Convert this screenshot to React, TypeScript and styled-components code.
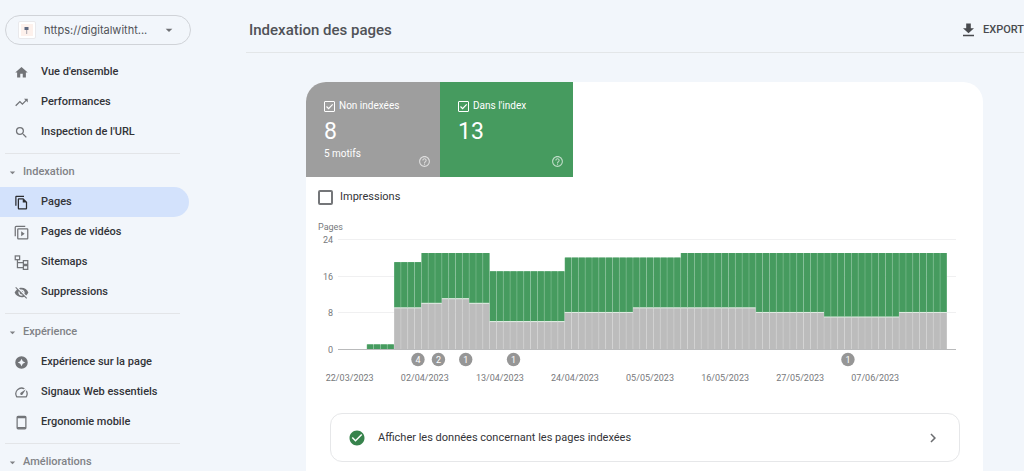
import React from "react";
import styled, { createGlobalStyle } from "styled-components";
import {
  MdArrowDropDown,
  MdCheckCircle,
  MdChevronRight,
  MdHelpOutline,
  MdHome,
  MdOutlineFileCopy,
  MdOutlineSpeed,
  MdSearch,
  MdTrendingUp,
  MdVisibilityOff,
} from "react-icons/md";

const GlobalStyle = createGlobalStyle`
  *, *::before, *::after { box-sizing: border-box; }
  body {
    margin: 0;
    background: #f2f6fb;
    color: #333438;
    font-family: Roboto, "Liberation Sans", sans-serif;
    font-size: 11px;
    line-height: 16px;
    overflow: hidden;
  }
  button { font: inherit; color: inherit; border: 0; background: none; padding: 0; cursor: pointer; }
`;

const Layout = styled.div`
  display: grid;
  grid-template-columns: 246px minmax(0, 1fr);
  height: 100vh;
  overflow: hidden;
`;

const Sidebar = styled.aside`
  padding-top: 15px;
`;

const PropertyPicker = styled.button`
  display: flex;
  align-items: center;
  width: 186px;
  height: 30px;
  margin: 0 0 12px 5px;
  padding: 0 13px 0 12px;
  border: 1px solid #d0d3d8;
  border-radius: 15px;
  color: #505257;
  font-family: Inter, Roboto, sans-serif;

  > svg:last-child { color: #6f7175; }
`;

const PropertyName = styled.span`
  flex: 1;
  margin-left: 8px;
  text-align: left;
`;

const Nav = styled.nav`
  font-weight: 500;
`;

const NavLink = styled.a<{ $active?: boolean }>`
  display: flex;
  align-items: center;
  gap: 12px;
  width: 189px;
  height: 30px;
  padding-left: 14px;
  border-radius: 0 15px 15px 0;
  background: ${(p) => (p.$active ? "#d3e2fc" : "transparent")};
  color: #333438;
  text-decoration: none;
  white-space: nowrap;

  svg {
    color: ${(p) => (p.$active ? "#2b2c30" : "#727478")};
  }
`;

const SectionToggle = styled.button`
  display: flex;
  align-items: center;
  gap: 4px;
  height: 30px;
  padding-left: 6px;
  color: #808286;
  font-weight: 500;
`;

const Divider = styled.hr`
  width: 175px;
  height: 1px;
  margin: 6px 0 3px 5px;
  border: 0;
  background: #e3e5e8;
`;

const Main = styled.main`
  min-width: 0;
`;

const Header = styled.header`
  display: flex;
  align-items: center;
  justify-content: space-between;
  height: 53px;
  padding: 7px 0 0 3px;
  border-bottom: 1px solid #e3e6e8;
`;

const Title = styled.h1`
  margin: 0;
  color: #505257;
  font-size: 15px;
  font-weight: 500;
  line-height: 20px;
`;

const ExportButton = styled.button`
  display: flex;
  align-items: center;
  gap: 7px;
  color: #484a4e;
  font-weight: 500;
`;

const Card = styled.section`
  margin: 29px 41px 0 60px;
  min-height: 420px;
  border-radius: 20px;
  background: #fff;
  overflow: hidden;
`;

const Tiles = styled.div`
  display: flex;
`;

const Tile = styled.div<{ $color: string }>`
  position: relative;
  width: 134px;
  height: 95px;
  padding: 16px 0 0 18px;
  background: ${(p) => p.$color};
  color: #fff;
  font-size: 10px;

  & + & { width: 133px; }
`;

const CheckLabel = styled.label<{ $large?: boolean }>`
  display: flex;
  align-items: center;
  gap: ${(p) => (p.$large ? 7 : 4)}px;
  font-size: ${(p) => (p.$large ? 11 : 10)}px;
  padding: ${(p) => (p.$large ? "12px 0 0 12px" : "0")};
`;

const CheckBox = styled.span`
  position: relative;
  display: flex;

  svg {
    position: absolute;
    inset: 0;
    pointer-events: none;
  }
`;

const CheckInput = styled.input<{ $large?: boolean }>`
  appearance: none;
  width: ${(p) => (p.$large ? 15 : 11)}px;
  height: ${(p) => (p.$large ? 15 : 11)}px;
  margin: 0;
  border: ${(p) => (p.$large ? "2px solid #747679" : "1px solid #fff")};
  border-radius: ${(p) => (p.$large ? 2 : 1)}px;
`;

const Count = styled.div`
  margin-top: 4px;
  font-size: 23px;
  line-height: 28px;
`;

const HelpButton = styled.button`
  position: absolute;
  right: 9px;
  bottom: 9px;
  display: flex;
  opacity: 0.65;
`;

const ChartFigure = styled.figure`
  margin: 15px 23px 0 12px;

  svg { display: block; width: 100%; height: auto; }
  text { font-size: 9px; fill: #77797c; }
`;

const IndexedLink = styled.a`
  display: flex;
  align-items: center;
  height: 49px;
  margin: 29px 23px 0 24px;
  padding: 0 17px;
  border: 1px solid #e6e7e9;
  border-radius: 12px;
  color: #333438;
  text-decoration: none;
`;

const IndexedText = styled.span`
  flex: 1;
  margin-left: 12px;
`;

const VideoPagesIcon = () => (
  <svg width="15" height="15" viewBox="0 0 24 24" fill="none" stroke="currentColor" strokeWidth="2" aria-hidden="true">
    <path d="M2 18V3.500Q2 2 3.500 2H18" />
    <rect x="6" y="6" width="16" height="16" rx="1" />
    <path d="M11.500 10v8l5.500-4z" fill="currentColor" stroke="none" />
  </svg>
);

const SitemapIcon = () => (
  <svg width="15" height="15" viewBox="0 0 24 24" fill="none" stroke="currentColor" strokeWidth="2" aria-hidden="true">
    <rect x="2" y="1.500" width="7" height="6" />
    <rect x="15" y="9" width="7" height="6" />
    <rect x="15" y="17" width="7" height="6" />
    <path d="M5.500 7.500v12.500H15M5.500 12H15" />
  </svg>
);

const ExperienceIcon = () => (
  <svg width="15" height="15" viewBox="0 0 24 24" fill="currentColor" aria-hidden="true">
    <path
      fillRule="evenodd"
      d="M12 2a10 10 0 1 0 0 20 10 10 0 0 0 0-20zm0 4 2 4 4 2-4 2-2 4-2-4-4-2 4-2z"
    />
  </svg>
);

const MobileIcon = () => (
  <svg width="15" height="15" viewBox="0 0 24 24" fill="none" stroke="currentColor" aria-hidden="true">
    <rect x="5" y="2" width="14" height="20" rx="1.500" strokeWidth="2" />
    <path d="M5 3.500h14M5 20.500h14" strokeWidth="3" />
  </svg>
);

const DownloadIcon = () => (
  <svg width="15" height="16" viewBox="0 0 15 16" fill="currentColor" aria-hidden="true">
    <path d="M5.200 1.500h4.600v4.700H13L7.500 11.200 2 6.200h3.200zM2 12.700h11v1.500H2z" />
  </svg>
);

const SiteIcon = () => (
  <svg width="18" height="19" viewBox="0 0 18 19" aria-hidden="true">
    <rect x="0.500" y="0.500" width="17" height="17" rx="1.500" fill="#fff" stroke="#e9e9ec" />
    <rect x="3" y="3" width="12" height="12" fill="#fdf1ec" />
    <path d="M6.500 6h4v3h-4z" fill="#5d6880" />
    <path d="M8.700 9v4" stroke="#a9a5ad" />
  </svg>
);

const CheckMark = () => (
  <svg width="11" height="11" viewBox="0 0 11 11" fill="none" stroke="#fff" strokeWidth="1.200" aria-hidden="true">
    <path d="M2.500 5.500 4.600 7.600 8.700 3.300" />
  </svg>
);

type Item = { label: string; icon: React.ReactNode; active?: boolean };

const overview: Item[] = [
  { label: "Vue d'ensemble", icon: <MdHome size={15} /> },
  { label: "Performances", icon: <MdTrendingUp size={15} /> },
  { label: "Inspection de l'URL", icon: <MdSearch size={15} /> },
];

const sections: { title: string; items: Item[] }[] = [
  {
    title: "Indexation",
    items: [
      { label: "Pages", icon: <MdOutlineFileCopy size={15} />, active: true },
      { label: "Pages de vidéos", icon: <VideoPagesIcon /> },
      { label: "Sitemaps", icon: <SitemapIcon /> },
      { label: "Suppressions", icon: <MdVisibilityOff size={15} /> },
    ],
  },
  {
    title: "Expérience",
    items: [
      { label: "Expérience sur la page", icon: <ExperienceIcon /> },
      { label: "Signaux Web essentiels", icon: <MdOutlineSpeed size={15} /> },
      { label: "Ergonomie mobile", icon: <MobileIcon /> },
    ],
  },
  { title: "Améliorations", items: [] },
];

const NavItems = ({ items }: { items: Item[] }) => (
  <>
    {items.map((item) => (
      <NavLink key={item.label} href="#" $active={item.active} aria-current={item.active ? "page" : undefined}>
        {item.icon}
        {item.label}
      </NavLink>
    ))}
  </>
);

/* Runs of identical days: [number of days, total pages, pages not indexed] */
const runs: [number, number, number][] = [
  [4, 1, 0],
  [4, 19, 9],
  [3, 21, 10],
  [4, 21, 11],
  [3, 21, 10],
  [11, 17, 6],
  [10, 20, 8],
  [7, 20, 9],
  [11, 21, 9],
  [10, 21, 8],
  [11, 21, 7],
  [7, 21, 8],
];

const days = runs.flatMap(([n, total, out]) => Array.from({ length: n }, () => ({ total, out })));
const dates = [
  "22/03/2023",
  "02/04/2023",
  "13/04/2023",
  "24/04/2023",
  "05/05/2023",
  "16/05/2023",
  "27/05/2023",
  "07/06/2023",
];
const markers = [
  { day: 10, count: 4 },
  { day: 13, count: 2 },
  { day: 17, count: 1 },
  { day: 24, count: 1 },
  { day: 73, count: 1 },
];

const STEP = 6.825;
const BASE = 129;
const UNIT = 4.57;
const dayX = (day: number) => 28.3 + day * STEP;
const valueY = (value: number) => BASE - value * UNIT;

const PagesChart = () => (
  <svg viewBox="0 0 642 164" role="img" aria-label="Pages">
    <text x="0" y="10">Pages</text>
    {[24, 16, 8, 0].map((v) => (
      <g key={v}>
        <path d={`M20 ${Math.round(valueY(v)) + 0.5}H638`} stroke={v ? "#f0f0f1" : "#c9cacb"} />
        <text x="15" y={valueY(v) + 4} textAnchor="end">{v}</text>
      </g>
    ))}
    {days.map(({ total, out }, i) => {
      const x = dayX(i + 3);
      return (
        <g key={i}>
          <rect x={x} y={valueY(total)} width={STEP} height={(total - out) * UNIT} fill="#72b687" />
          <rect x={x + 0.4} y={valueY(total)} width={STEP - 0.8} height={(total - out) * UNIT} fill="#469b5f" />
          {out > 0 && (
            <>
              <rect x={x} y={valueY(out)} width={STEP} height={out * UNIT} fill="#cbcbcb" />
              <rect x={x + 0.4} y={valueY(out)} width={STEP - 0.8} height={out * UNIT} fill="#bcbcbc" />
              <rect x={x} y={valueY(out) - 0.5} width={STEP} height="1" fill="#e1eee4" />
            </>
          )}
        </g>
      );
    })}
    <path d="M20 129.500H638" stroke="#b9babb" />
    {markers.map(({ day, count }) => {
      const x = dayX(day) + STEP / 2;
      return (
        <g key={day}>
          <circle cx={x} cy="139.500" r="6.700" fill="#969696" />
          <text x={x} y="142.500" textAnchor="middle" style={{ fill: "#fff", fontSize: 9 }}>{count}</text>
        </g>
      );
    })}
    {dates.map((date, i) => (
      <text key={date} x={dayX(i * 11) + STEP / 2} y="161" textAnchor="middle">{date}</text>
    ))}
  </svg>
);

export default function App() {
  return (
    <>
      <GlobalStyle />
      <Layout>
        <Sidebar>
          <PropertyPicker>
            <SiteIcon />
            <PropertyName>https://digitalwitht...</PropertyName>
            <MdArrowDropDown size={16} />
          </PropertyPicker>
          <Nav>
            <NavItems items={overview} />
            {sections.map((section) => (
              <React.Fragment key={section.title}>
                <Divider />
                <SectionToggle aria-expanded="true">
                  <MdArrowDropDown size={13} />
                  {section.title}
                </SectionToggle>
                <NavItems items={section.items} />
              </React.Fragment>
            ))}
          </Nav>
        </Sidebar>
        <Main>
          <Header>
            <Title>Indexation des pages</Title>
            <ExportButton>
              <DownloadIcon />
              EXPORT
            </ExportButton>
          </Header>
          <Card>
            <Tiles>
              <Tile $color="#9e9e9e">
                <CheckLabel>
                  <CheckBox>
                    <CheckInput type="checkbox" defaultChecked />
                    <CheckMark />
                  </CheckBox>
                  Non indexées
                </CheckLabel>
                <Count>8</Count>
                <div>5 motifs</div>
                <HelpButton aria-label="Aide : non indexées"><MdHelpOutline size={13} /></HelpButton>
              </Tile>
              <Tile $color="#469b5f">
                <CheckLabel>
                  <CheckBox>
                    <CheckInput type="checkbox" defaultChecked />
                    <CheckMark />
                  </CheckBox>
                  Dans l'index
                </CheckLabel>
                <Count>13</Count>
                <HelpButton aria-label="Aide : dans l'index"><MdHelpOutline size={13} /></HelpButton>
              </Tile>
            </Tiles>
            <CheckLabel $large>
              <CheckInput type="checkbox" $large />
              Impressions
            </CheckLabel>
            <ChartFigure>
              <PagesChart />
            </ChartFigure>
            <IndexedLink href="#">
              <MdCheckCircle size={18} color="#37834c" />
              <IndexedText>Afficher les données concernant les pages indexées</IndexedText>
              <MdChevronRight size={18} color="#6b6d70" />
            </IndexedLink>
          </Card>
        </Main>
      </Layout>
    </>
  );
}
